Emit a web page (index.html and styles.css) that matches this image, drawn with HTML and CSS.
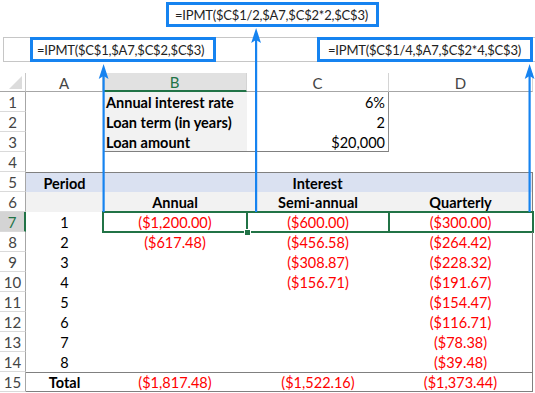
FILE: index.html
```html
<!DOCTYPE html>
<html>
<head>
<meta charset="utf-8">
<link rel="stylesheet" href="styles.css">
</head>
<body>
<div class="page">
  <div class="top">
    <div class="fbox box-top">=IPMT($C$1/2,$A7,$C$2*2,$C$3)</div>
  </div>
  <div class="fbar">
    <div class="fb-name"></div>
    <div class="fbox box-1">=IPMT($C$1,$A7,$C$2,$C$3)</div>
    <div class="fb-fill"></div>
    <div class="fbox box-3">=IPMT($C$1/4,$A7,$C$2*4,$C$3)</div>
    <div class="fb-tail"></div>
  </div>
  <div class="sheet">
    <div class="corner"><svg width="13" height="13" viewBox="0 0 13 13"><polygon points="13,0 13,13 0,13" fill="#dcdcdc"/></svg></div>
    <div class="ch">A</div>
    <div class="ch sel">B</div>
    <div class="ch">C</div>
    <div class="ch">D</div>

    <div class="rh">1</div>
    <div class="c"></div>
    <div class="c lbl">Annual interest rate</div>
    <div class="c val">6%</div>
    <div class="c"></div>

    <div class="rh">2</div>
    <div class="c"></div>
    <div class="c lbl">Loan term (in years)</div>
    <div class="c val">2</div>
    <div class="c"></div>

    <div class="rh">3</div>
    <div class="c"></div>
    <div class="c lbl bb">Loan amount</div>
    <div class="c val bb">$20,000</div>
    <div class="c"></div>

    <div class="rh">4</div>
    <div class="c"></div>
    <div class="c"></div>
    <div class="c"></div>
    <div class="c"></div>

    <div class="rh">5</div>
    <div class="c blue bt ctr b">Period</div>
    <div class="c blue bt ctr b br span3">Interest</div>

    <div class="rh">6</div>
    <div class="c gray"></div>
    <div class="c gray ctr b">Annual</div>
    <div class="c gray ctr b">Semi-annual</div>
    <div class="c gray ctr b br">Quarterly</div>

    <div class="rh sel">7</div>
    <div class="c ctr">1</div>
    <div class="c ctr red pick">($1,200.00)<span class="handle"></span></div>
    <div class="c ctr red pick">($600.00)</div>
    <div class="c ctr red pick br">($300.00)</div>

    <div class="rh">8</div>
    <div class="c ctr">2</div>
    <div class="c ctr red">($617.48)</div>
    <div class="c ctr red">($456.58)</div>
    <div class="c ctr red br">($264.42)</div>

    <div class="rh">9</div>
    <div class="c ctr">3</div>
    <div class="c"></div>
    <div class="c ctr red">($308.87)</div>
    <div class="c ctr red br">($228.32)</div>

    <div class="rh">10</div>
    <div class="c ctr">4</div>
    <div class="c"></div>
    <div class="c ctr red">($156.71)</div>
    <div class="c ctr red br">($191.67)</div>

    <div class="rh">11</div>
    <div class="c ctr">5</div>
    <div class="c"></div>
    <div class="c"></div>
    <div class="c ctr red br">($154.47)</div>

    <div class="rh">12</div>
    <div class="c ctr">6</div>
    <div class="c"></div>
    <div class="c"></div>
    <div class="c ctr red br">($116.71)</div>

    <div class="rh">13</div>
    <div class="c ctr">7</div>
    <div class="c"></div>
    <div class="c"></div>
    <div class="c ctr red br">($78.38)</div>

    <div class="rh">14</div>
    <div class="c ctr">8</div>
    <div class="c"></div>
    <div class="c"></div>
    <div class="c ctr red br">($39.48)</div>

    <div class="rh">15</div>
    <div class="c ctr b bt bb">Total</div>
    <div class="c ctr red bt bb">($1,817.48)</div>
    <div class="c ctr red bt bb">($1,522.16)</div>
    <div class="c ctr red bt bb br">($1,373.44)</div>
  </div>

  <svg class="arrows" width="535" height="393" viewBox="0 0 535 393">
    <g fill="#1683f0" stroke="none">
      <rect x="102.5" y="74" width="2.2" height="138"/>
      <polygon points="103.6,64 108.5,79 103.6,76 98.7,79"/>
      <rect x="255" y="38" width="2.2" height="174"/>
      <polygon points="256.1,28 261,43 256.1,40 251.2,43"/>
      <rect x="528.5" y="74" width="2.2" height="138"/>
      <polygon points="529.6,64 534.5,79 529.6,76 524.7,79"/>
    </g>
  </svg>
</div>
</body>
</html>
```

FILE: styles.css
```css
html, body {
  margin: 0;
  padding: 0;
  background: #ffffff;
}

.page {
  position: relative;
  width: 535px;
  height: 393px;
  overflow: hidden;
  font-family: "Lato", "Open Sans", sans-serif;
  color: #000000;
}

.top {
  height: 37px;
  padding-top: 2px;
  padding-left: 166px;
  box-sizing: border-box;
}

.fbox {
  box-sizing: border-box;
  height: 25px;
  border: 3px solid #1683f0;
  display: flex;
  align-items: center;
  font-size: 13px;
  letter-spacing: -0.2px;
  color: #222222;
  white-space: nowrap;
  overflow: hidden;
}

.box-top {
  width: 213px;
  padding-left: 6px;
}

.fbar {
  display: flex;
  height: 25px;
  padding-left: 3px;
}

.fb-name {
  width: 27px;
  box-sizing: border-box;
  border: 1px solid #c6c6c6;
  border-right: none;
}

.box-1 {
  width: 186px;
  padding-left: 4px;
}

.fb-fill {
  flex: 1;
  border-top: 1px solid #c6c6c6;
  border-bottom: 1px solid #c6c6c6;
}

.box-3 {
  width: 216px;
  padding-left: 8px;
}

.fb-tail {
  width: 2px;
  border-top: 1px solid #c6c6c6;
  border-bottom: 1px solid #c6c6c6;
}

.sheet {
  margin-top: 11px;
  display: grid;
  grid-template-columns: 26px 77px 144px 142px 144px;
  grid-template-rows: 19px repeat(15, 20px);
  font-size: 14.5px;
}

.sheet > div {
  box-sizing: border-box;
  display: flex;
  align-items: center;
  white-space: nowrap;
  position: relative;
  padding-top: 1px;
}

.corner {
  border-right: 1px solid #c8c8c8;
  border-bottom: 1px solid #a6a6a6;
  justify-content: flex-end;
  align-items: flex-end !important;
  padding: 0 3px 2px 0;
}

.ch {
  justify-content: center;
  color: #444444;
  border-right: 1px solid #d4d4d4;
  border-bottom: 1px solid #a6a6a6;
  font-size: 15px;
}

.ch.sel {
  background: #e1e1e1;
  color: #217346;
  border-bottom: 2px solid #217346;
}

.rh {
  justify-content: center;
  color: #444444;
  border-right: 1px solid #a6a6a6;
  border-bottom: 1px solid #dadada;
  font-size: 15px;
}

.rh.sel {
  background: #d4d4d4;
  color: #217346;
  border-right: 2px solid #217346;
}

.lbl {
  background: #f2f2f2;
  font-weight: bold;
  padding-left: 3px;
}

.val {
  justify-content: flex-end;
  padding-right: 3px;
  border-right: 1px solid #8c8c8c;
}

.blue {
  background: #dae1f1;
}

.gray {
  background: #f2f2f2;
}

.ctr {
  justify-content: center;
}

.b {
  font-weight: bold;
}

.red {
  color: #ff0000;
}

.bt {
  border-top: 1px solid #808080;
}

.bb {
  border-bottom: 1px solid #808080;
}

.br {
  border-right: 1px solid #808080;
}

.span3 {
  grid-column: span 3;
}

.pick {
  outline: 2px solid #217346;
  outline-offset: -1px;
}

.handle {
  position: absolute;
  right: -4px;
  bottom: -4px;
  width: 5px;
  height: 5px;
  background: #217346;
  border: 1px solid #ffffff;
  z-index: 2;
}

.arrows {
  position: absolute;
  left: 0;
  top: 0;
  pointer-events: none;
}
```
